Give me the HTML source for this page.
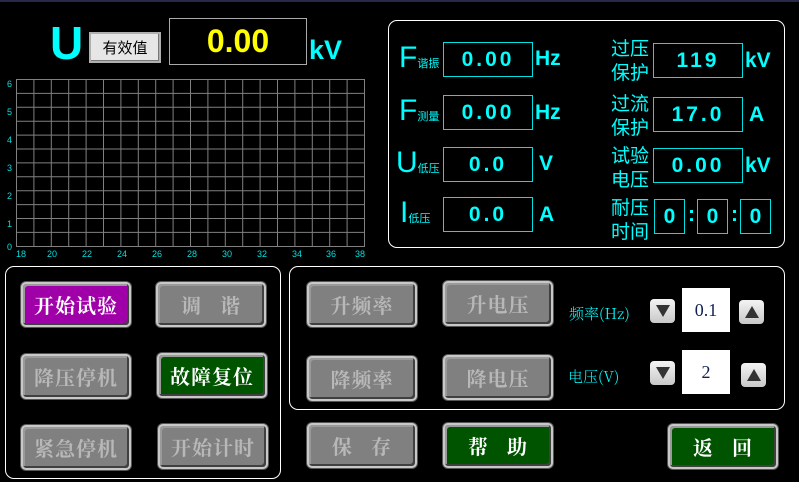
<!DOCTYPE html>
<html><head><meta charset="utf-8"><style>
*{margin:0;padding:0;box-sizing:border-box}
body{width:799px;height:482px;background:#000;position:relative;overflow:hidden;font-family:"Liberation Sans","Noto Sans CJK SC",sans-serif;border-top:2px solid #2a2a48}
.a{position:absolute}
.c{color:#00ffff}
.panel{position:absolute;border:1px solid #fff;border-radius:9px}
.btn{position:absolute;width:110px;height:45px;background:#808080;border:2px solid #c8c8c8;border-radius:5px;box-shadow:inset -2px -2px 0 #404040,inset 2px 2px 0 #9a9a9a,0 0 0 1px #555;color:#b8b8b8;font-family:"Noto Serif CJK SC","Noto Sans CJK SC",serif;font-size:20px;font-weight:bold;display:flex;align-items:center;justify-content:center;letter-spacing:1px}
.pur{background:#a000a8;color:#fff}
.grn{background:#005400;color:#fff}
.box{position:absolute;border:1px solid #00e0e0;color:#00ffff;font-family:"Liberation Sans",sans-serif;font-weight:bold;font-size:21px;letter-spacing:3px;display:flex;align-items:center;justify-content:center}
.u{position:absolute;color:#00ffff;font-weight:bold;font-size:21px}
.lbl{position:absolute;color:#00ffff;font-size:19px;line-height:24px;font-family:"Noto Sans CJK SC",sans-serif}
.big{position:absolute;color:#00ffff;font-size:30px;font-family:"Liberation Sans",sans-serif;font-weight:normal}
.sub{font-size:11px}
.sp{position:absolute;width:25px;height:24px;background:linear-gradient(#f4f4f4,#c8c8c8);border-radius:4px;display:flex;align-items:center;justify-content:center}
.val{position:absolute;width:48px;height:44px;background:#fff;font-family:"Liberation Serif",serif;font-size:18px;display:flex;align-items:center;justify-content:center;color:#102050}
</style></head><body>
<div class="a c" style="left:50px;top:14px;font-size:46px;font-weight:bold">U</div>
<div class="a" style="left:89px;top:30px;width:72px;height:31px;background:#e6e6e6;border:2px solid #b0b0b0;box-shadow:inset -1px -1px 0 #777;font-size:15px;display:flex;align-items:center;justify-content:center;font-family:'Noto Sans CJK SC',sans-serif">有效值</div>
<div class="a" style="left:169px;top:16px;width:138px;height:47px;border:1px solid #aaa;color:#ffff00;font-weight:bold;font-size:32px;display:flex;align-items:center;justify-content:center">0.00</div>
<div class="a c" style="left:309px;top:33px;font-size:27px;font-weight:bold">kV</div>
<svg class="a" style="left:0;top:70px" width="372" height="190">
<g stroke="#808080" stroke-width="1">
<rect x="16.5" y="7.5" width="348" height="167" fill="none"/>
<path d="M33.9 7V175M51.3 7V175M68.7 7V175M86.1 7V175M103.5 7V175M120.9 7V175M138.3 7V175M155.7 7V175M173.1 7V175M190.5 7V175M207.9 7V175M225.3 7V175M242.7 7V175M260.1 7V175M277.5 7V175M294.9 7V175M312.3 7V175M329.7 7V175M347.1 7V175"/>
<path d="M16 21.4H365M16 35.3H365M16 49.2H365M16 63.1H365M16 77H365M16 90.9H365M16 104.8H365M16 118.7H365M16 132.6H365M16 146.5H365M16 160.4H365"/>
</g>
<g fill="#00e0e0" font-size="9" font-family="Liberation Sans">
<text x="7" y="15">6</text><text x="7" y="43">5</text><text x="7" y="71">4</text><text x="7" y="99">3</text><text x="7" y="127">2</text><text x="7" y="155">1</text><text x="7" y="178">0</text>
<text x="16" y="185">18</text><text x="47" y="185">20</text><text x="82" y="185">22</text><text x="117" y="185">24</text><text x="152" y="185">26</text><text x="187" y="185">28</text><text x="222" y="185">30</text><text x="257" y="185">32</text><text x="292" y="185">34</text><text x="326" y="185">36</text><text x="355" y="185">38</text>
</g></svg>

<div class="panel" style="left:388px;top:18px;width:397px;height:228px"></div>
<div class="big" style="left:399px;top:39px">F<span class="sub">谐振</span></div>
<div class="big" style="left:399px;top:92px">F<span class="sub">测量</span></div>
<div class="big" style="left:396px;top:144px">U<span class="sub">低压</span></div>
<div class="big" style="left:400px;top:194px">I<span class="sub">低压</span></div>
<div class="box" style="left:443px;top:40px;width:90px;height:35px">0.00</div>
<div class="box" style="left:443px;top:93px;width:90px;height:35px">0.00</div>
<div class="box" style="left:443px;top:145px;width:90px;height:35px">0.0</div>
<div class="box" style="left:443px;top:195px;width:90px;height:35px">0.0</div>
<div class="u" style="left:535px;top:45px">Hz</div>
<div class="u" style="left:535px;top:99px">Hz</div>
<div class="u" style="left:539px;top:150px">V</div>
<div class="u" style="left:539px;top:201px">A</div>
<div class="lbl" style="left:611px;top:34px">过压<br>保护</div>
<div class="lbl" style="left:611px;top:89px">过流<br>保护</div>
<div class="lbl" style="left:611px;top:141px">试验<br>电压</div>
<div class="lbl" style="left:611px;top:193px">耐压<br>时间</div>
<div class="box" style="left:653px;top:41px;width:90px;height:35px">119</div>
<div class="box" style="left:653px;top:95px;width:90px;height:35px">17.0</div>
<div class="box" style="left:653px;top:146px;width:90px;height:35px">0.00</div>
<div class="u" style="left:745px;top:47px">kV</div>
<div class="u" style="left:749px;top:101px">A</div>
<div class="u" style="left:745px;top:152px">kV</div>
<div class="box" style="left:654px;top:197px;width:31px;height:35px;letter-spacing:0">0</div>
<div class="box" style="left:697px;top:197px;width:31px;height:35px;letter-spacing:0">0</div>
<div class="box" style="left:740px;top:197px;width:31px;height:35px;letter-spacing:0">0</div>
<div class="u" style="left:688px;top:201px">:</div>
<div class="u" style="left:731px;top:201px">:</div>

<div class="panel" style="left:5px;top:264px;width:276px;height:213px"></div>
<div class="panel" style="left:289px;top:264px;width:496px;height:144px"></div>
<div class="btn pur" style="left:21px;top:280px">开始试验</div>
<div class="btn" style="left:156px;top:280px">调&nbsp;&nbsp;&nbsp;谐</div>
<div class="btn" style="left:21px;top:352px">降压停机</div>
<div class="btn grn" style="left:157px;top:351px">故障复位</div>
<div class="btn" style="left:21px;top:423px">紧急停机</div>
<div class="btn" style="left:158px;top:422px">开始计时</div>
<div class="btn" style="left:307px;top:280px">升频率</div>
<div class="btn" style="left:307px;top:354px">降频率</div>
<div class="btn" style="left:307px;top:421px">保&nbsp;&nbsp;&nbsp;存</div>
<div class="btn" style="left:443px;top:279px">升电压</div>
<div class="btn" style="left:443px;top:353px">降电压</div>
<div class="btn grn" style="left:443px;top:421px">帮&nbsp;&nbsp;&nbsp;助</div>
<div class="btn grn" style="left:668px;top:422px">返&nbsp;&nbsp;&nbsp;回</div>

<div class="a c" style="left:569px;top:301px;font-size:15px;font-family:'Noto Serif CJK SC',serif;font-weight:300">频率(Hz)</div>
<div class="a c" style="left:568px;top:364px;font-size:15px;font-family:'Noto Serif CJK SC',serif;font-weight:300">电压(V)</div>
<div class="sp" style="left:650px;top:297px"><svg width="14" height="12"><path d="M0 0H14L7 12Z" fill="#333"/></svg></div>
<div class="sp" style="left:739px;top:298px"><svg width="14" height="12"><path d="M0 12H14L7 0Z" fill="#333"/></svg></div>
<div class="sp" style="left:650px;top:359px"><svg width="14" height="12"><path d="M0 0H14L7 12Z" fill="#333"/></svg></div>
<div class="sp" style="left:741px;top:361px"><svg width="14" height="12"><path d="M0 12H14L7 0Z" fill="#333"/></svg></div>
<div class="val" style="left:682px;top:286px">0.1</div>
<div class="val" style="left:682px;top:348px">2</div>
</body></html>
